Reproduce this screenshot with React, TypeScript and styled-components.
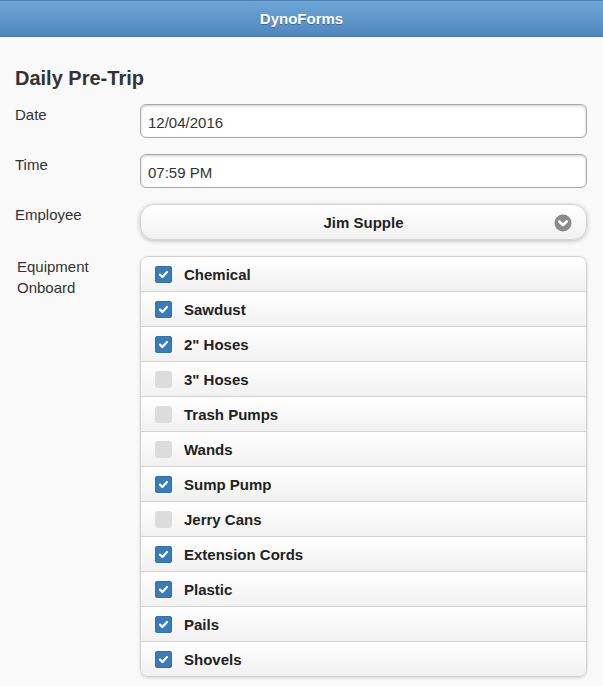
import React from 'react';
import styled, { createGlobalStyle } from 'styled-components';

const GlobalStyle = createGlobalStyle`
  html, body {
    margin: 0;
    padding: 0;
    background: #f9f9f9;
    font-family: "Liberation Sans", Arial, sans-serif;
    color: #333;
  }
`;

const Page = styled.div`
  width: 603px;
  min-height: 686px;
  background: #f9f9f9;
`;

const Header = styled.header`
  height: 35px;
  border-top: 1px solid #4b7db0;
  border-bottom: 1px solid #4a79a8;
  background: linear-gradient(#6ea7d6, #4f86bd);
  display: flex;
  align-items: center;
  justify-content: center;
  color: #fff;
  font-size: 15px;
  font-weight: bold;
  text-shadow: 0 1px 0 #3a6a9a;
`;

const Content = styled.main`
  padding: 29px 15px 0 15px;
`;

const Title = styled.h2`
  margin: 0 0 14px 0;
  font-size: 20px;
  line-height: 24px;
  font-weight: bold;
  color: #333;
`;

const Field = styled.div<{ $gap?: number }>`
  display: grid;
  grid-template-columns: 125px 1fr;
  margin-bottom: ${p => p.$gap ?? 16}px;
`;

const Label = styled.label<{ $indent?: number; $top?: number }>`
  font-size: 15px;
  line-height: 21px;
  padding-left: ${p => p.$indent ?? 0}px;
  padding-top: ${p => p.$top ?? 0}px;
  color: #333;
`;

const TextInput = styled.div`
  height: 34px;
  box-sizing: border-box;
  border: 1px solid #a9a9a9;
  border-radius: 6px;
  background: #fff;
  box-shadow: inset 0 1px 3px rgba(0, 0, 0, 0.2);
  display: flex;
  align-items: center;
  padding: 2px 7px 0;
  font-size: 15px;
  color: #333;
  margin-right: 1px;
`;

const SelectButton = styled.div`
  position: relative;
  height: 36px;
  box-sizing: border-box;
  border: 1px solid #d4d4d4;
  border-radius: 14px;
  background: linear-gradient(#ffffff, #f1f1f1);
  box-shadow: 0 1px 4px rgba(0, 0, 0, 0.25);
  display: flex;
  align-items: center;
  justify-content: center;
  font-size: 15px;
  font-weight: bold;
  color: #222;
  text-shadow: 0 1px 0 #fff;
  margin-right: 1px;
`;

const SelectIcon = styled.span`
  position: absolute;
  right: 14px;
  top: 9px;
  width: 18px;
  height: 18px;
`;

const CheckGroup = styled.div`
  border: 1px solid #d0d0d0;
  border-radius: 8px;
  overflow: hidden;
  box-shadow: 0 1px 3px rgba(0, 0, 0, 0.15);
  margin-right: 1px;
`;

const CheckRow = styled.div`
  height: 34px;
  display: flex;
  align-items: center;
  padding-left: 14px;
  background: linear-gradient(#ffffff, #f1f1f1);
  border-top: 1px solid #d2d2d2;
  &:first-child {
    border-top: none;
  }
  font-size: 15px;
  font-weight: bold;
  color: #222;
`;

const Box = styled.span<{ $checked: boolean }>`
  width: 17px;
  height: 17px;
  border-radius: 3px;
  margin-right: 12px;
  background: ${p => (p.$checked ? '#3a7cb8' : '#dcdcdc')};
  box-shadow: ${p => (p.$checked ? 'inset 0 0 0 1px #3470a6' : 'none')};
  display: flex;
  align-items: center;
  justify-content: center;
`;

const Check = () => (
  <svg width="11" height="11" viewBox="0 0 11 11">
    <path d="M2 5.6 L4.4 8 L9 3" fill="none" stroke="#fff" strokeWidth="2.2" strokeLinecap="round" strokeLinejoin="round" />
  </svg>
);

const Chevron = () => (
  <svg width="18" height="18" viewBox="0 0 18 18">
    <circle cx="9" cy="9" r="8.5" fill="#8a8a8a" />
    <path d="M5.3 7.5 L9 11 L12.7 7.5" fill="none" stroke="#fff" strokeWidth="2.6" strokeLinecap="round" strokeLinejoin="round" />
  </svg>
);

const equipment: Array<{ name: string; checked: boolean }> = [
  { name: 'Chemical', checked: true },
  { name: 'Sawdust', checked: true },
  { name: '2" Hoses', checked: true },
  { name: '3" Hoses', checked: false },
  { name: 'Trash Pumps', checked: false },
  { name: 'Wands', checked: false },
  { name: 'Sump Pump', checked: true },
  { name: 'Jerry Cans', checked: false },
  { name: 'Extension Cords', checked: true },
  { name: 'Plastic', checked: true },
  { name: 'Pails', checked: true },
  { name: 'Shovels', checked: true },
];

export default function App() {
  return (
    <Page>
      <GlobalStyle />
      <Header>DynoForms</Header>
      <Content>
        <Title>Daily Pre-Trip</Title>
        <Field>
          <Label>Date</Label>
          <TextInput>12/04/2016</TextInput>
        </Field>
        <Field>
          <Label>Time</Label>
          <TextInput>07:59 PM</TextInput>
        </Field>
        <Field $gap={16}>
          <Label>Employee</Label>
          <SelectButton>
            Jim Supple
            <SelectIcon>
              <Chevron />
            </SelectIcon>
          </SelectButton>
        </Field>
        <Field>
          <Label $indent={2}>
            Equipment
            <br />
            Onboard
          </Label>
          <CheckGroup>
            {equipment.map(item => (
              <CheckRow key={item.name}>
                <Box $checked={item.checked}>{item.checked && <Check />}</Box>
                {item.name}
              </CheckRow>
            ))}
          </CheckGroup>
        </Field>
      </Content>
    </Page>
  );
}
